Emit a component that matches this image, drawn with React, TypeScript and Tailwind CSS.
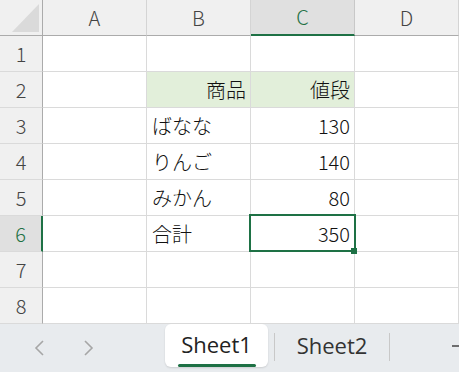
import React from "react";

const cols = ["A", "B", "C", "D"];

type Cell = { text?: string; align?: "left" | "right"; fill?: boolean };

const rows: Cell[][] = [
  [{}, {}, {}, {}],
  [{}, { text: "商品", align: "right", fill: true }, { text: "値段", align: "right", fill: true }, {}],
  [{}, { text: "ばなな" }, { text: "130", align: "right" }, {}],
  [{}, { text: "りんご" }, { text: "140", align: "right" }, {}],
  [{}, { text: "みかん" }, { text: "80", align: "right" }, {}],
  [{}, { text: "合計" }, { text: "350", align: "right" }, {}],
  [{}, {}, {}, {}],
  [{}, {}, {}, {}],
];

const font = { fontFamily: '"Noto Sans CJK JP", "Noto Sans", sans-serif' };

const App: React.FC = () => {
  return (
    <div className="w-[459px] h-[372px] overflow-hidden bg-white flex flex-col font-light" style={font}>
      {/* column headers */}
      <div className="flex h-[36px] shrink-0">
        <div className="w-[43px] shrink-0 bg-[#f0f0f0] border-r border-b border-[#ababab] relative">
          <svg className="absolute left-0 top-0" width="42" height="35">
            <polygon points="39,4 39,32 12,32" fill="#dadada" />
          </svg>
        </div>
        {cols.map((c) => {
          const sel = c === "C";
          return (
            <div
              key={c}
              className={`w-[104px] shrink-0 flex items-center justify-center text-[20px] border-r ${
                sel
                  ? "bg-[#e0e0e0] text-[#1e7145] border-b-2 border-b-[#1e7145] border-r-[#c8c8c8]"
                  : "bg-[#f0f0f0] text-[#444] border-b border-b-[#ababab] border-r-[#d4d4d4]"
              }`}
            >
              {c}
            </div>
          );
        })}
      </div>

      {/* grid rows */}
      {rows.map((row, ri) => {
        const selRow = ri === 5;
        return (
          <div key={ri} className="flex h-[36px] shrink-0">
            <div
              className={`w-[43px] shrink-0 flex items-center justify-center text-[20px] border-b border-b-[#dadada] ${
                selRow
                  ? "bg-[#e0e0e0] text-[#1e7145] border-r-2 border-r-[#1e7145]"
                  : "bg-[#f0f0f0] text-[#444] border-r border-r-[#ababab]"
              }`}
            >
              {ri + 1}
            </div>
            {row.map((cell, ci) => {
              const sel = selRow && ci === 2;
              return (
                <div
                  key={ci}
                  className={`relative w-[104px] shrink-0 flex items-center px-[4px] text-[20px] text-[#111] border-r border-b border-[#dadada] ${
                    cell.fill ? "bg-[#e2efda]" : "bg-white"
                  } ${cell.align === "right" ? "justify-end" : "justify-start pl-[5px]"} ${sel ? "z-10" : ""}`}
                >
                  {cell.text}
                  {sel && (
                    <>
                      <div className="absolute left-[-2px] top-[-2px] w-[107px] h-[38px] border-2 border-[#1e7145]" />
                      <div className="absolute left-[100px] top-[32px] w-[6px] h-[6px] bg-[#1e7145]" />
                    </>
                  )}
                </div>
              );
            })}
          </div>
        );
      })}

      {/* sheet tabs */}
      <div
        className="flex-1 bg-[#e8ebee] flex items-start relative font-normal"
        style={{ fontFamily: '"Open Sans", "Noto Sans", sans-serif' }}
      >
        <div className="w-[165px] h-[48px] flex items-center pl-[34px] gap-[36px] shrink-0">
          <svg width="12" height="16" viewBox="0 0 12 16">
            <path d="M9 1 L2 8 L9 15" fill="none" stroke="#a6a6a6" strokeWidth="1.6" />
          </svg>
          <svg width="12" height="16" viewBox="0 0 12 16">
            <path d="M3 1 L10 8 L3 15" fill="none" stroke="#a6a6a6" strokeWidth="1.6" />
          </svg>
        </div>
        <div className="w-[103px] h-[43px] bg-white rounded-b-[6px] rounded-t-[6px] shadow-[0_1px_2px_rgba(0,0,0,0.12)] flex flex-col items-center shrink-0">
          <span className="text-[22px] leading-none mt-[9px] text-[#222]">Sheet1</span>
          <div className="w-[78px] h-[3px] bg-[#1e7145] rounded-full mt-[9px]" />
        </div>
        <div className="w-px h-[28px] bg-[#c8c8c8] mt-[9px] ml-[6px] shrink-0" />
        <div className="w-[114px] h-[43px] flex justify-center shrink-0">
          <span className="text-[22px] leading-none mt-[10px] text-[#333]">Sheet2</span>
        </div>
        <div className="w-px h-[28px] bg-[#c8c8c8] mt-[9px] shrink-0" />
        <svg className="ml-[62px] mt-[13px] shrink-0" width="18" height="18" viewBox="0 0 18 18">
          <path d="M0 9 H18 M9 0 V18" stroke="#444" strokeWidth="1.4" />
        </svg>
      </div>
    </div>
  );
};

export default App;
